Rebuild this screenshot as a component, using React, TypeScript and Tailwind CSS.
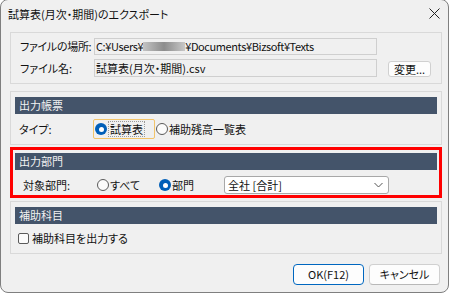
import type { ReactNode } from 'react';

const FONT =
  "font-['Noto_Sans_CJK_JP','Noto_Sans',sans-serif] [font-feature-settings:'palt']";

function Radio({ checked }: { checked?: boolean }) {
  if (checked) {
    return (
      <span className="flex h-[12px] w-[12px] shrink-0 items-center justify-center rounded-full bg-[#005fb8]">
        <span className="h-[5px] w-[5px] rounded-full bg-white" />
      </span>
    );
  }
  return (
    <span className="h-[12px] w-[12px] shrink-0 rounded-full border border-[#5a5a5a] bg-[#fbfbfb]" />
  );
}

function Header({ children }: { children: ReactNode }) {
  return (
    <div className="flex h-[17px] items-center bg-[#44546a] pl-[4px] text-[11px] leading-none text-[#f2f2f2]">
      {children}
    </div>
  );
}

export default function App() {
  return (
    <div className={'h-[294px] w-[450px] overflow-hidden whitespace-nowrap bg-white text-[11px] text-[#111] ' + FONT}>
      <div className="-mt-px flex h-[294px] w-[449px] flex-col rounded-[8px] border border-[#7f7f7f] bg-[#f0f0f0]">
        {/* title bar */}
        <div className="flex h-[32px] items-start justify-between pl-[7px] pr-[6px] pt-[6px]">
          <span className="leading-[16px]">試算表(月次・期間)のエクスポート</span>
          <svg width="11" height="11" viewBox="0 0 11 11" className="mt-[2px] mr-[2px]">
            <path d="M0.5 0.5 L10.5 10.5 M10.5 0.5 L0.5 10.5" stroke="#222" strokeWidth="1" />
          </svg>
        </div>

        <div className="flex flex-col pl-[9px]">
          {/* file location */}
          <div className="flex h-[52px] w-[432px] flex-col gap-[4px] border border-[#d9d9d9] pl-[9px] pt-[5px]">
            <div className="flex h-[17px] items-center">
              <span className="w-[74px] tracking-[-0.3px]">ファイルの場所:</span>
              <div className="flex h-[17px] w-[283px] items-center border border-[#cfcfcf] bg-[#f0f0f0] pl-[1px] text-[11px] tracking-[-0.4px]">
                <span>C:¥Users¥</span>
                <span className="h-[9px] w-[42px] bg-gradient-to-r from-[#c4c4c4] via-[#8c8c8c] to-[#c8c8c8]" />
                <span>¥Documents¥Bizsoft¥Texts</span>
              </div>
            </div>
            <div className="flex h-[18px] items-center">
              <span className="w-[74px]">ファイル名:</span>
              <div className="flex h-[18px] w-[283px] items-center border border-[#cfcfcf] bg-[#f0f0f0] pl-[1px]">
                試算表(月次・期間).csv
              </div>
              <button className="ml-[11px] mt-[2px] flex h-[16px] w-[43px] items-center justify-center rounded-[3px] border border-[#d0d0d0] bg-[#fdfdfd] text-[11px] leading-none">
                変更...
              </button>
            </div>
          </div>

          {/* output report */}
          <div className="mt-[7px] flex h-[54px] w-[432px] flex-col border border-[#d9d9d9] px-[4px] pt-[5px]">
            <Header>出力帳票</Header>
            <div className="mt-[5px] flex h-[20px] items-center">
              <span className="w-[78px] pl-[4px]">タイプ:</span>
              <div className="flex h-[20px] w-[62px] items-center gap-[1px] rounded-[2px] border border-[#f2c46a] pl-[1px]">
                <Radio checked />
                <span className="border border-dotted border-[#9a9a9a] px-[1px] leading-[14px]">試算表</span>
              </div>
              <div className="ml-[1px] flex items-center gap-[1px]">
                <Radio />
                <span>補助残高一覧表</span>
              </div>
            </div>
          </div>

          {/* output department (highlighted) */}
          <div className="mt-[2px] flex h-[51px] w-[432px] flex-col border-[3px] border-[#ff0000] px-[2px] pt-[3px]">
            <Header>出力部門</Header>
            <div className="mt-[6px] flex h-[18px] items-center">
              <span className="w-[82px] pl-[8px]">対象部門:</span>
              <div className="flex w-[62px] items-center gap-[1px]">
                <Radio />
                <span>すべて</span>
              </div>
              <div className="flex w-[65px] items-center gap-[1px]">
                <Radio checked />
                <span>部門</span>
              </div>
              <div className="flex h-[18px] w-[165px] items-center justify-between rounded-[3px] border border-[#a8a8a8] bg-white pl-[3px] pr-[5px]">
                <span>全社 [合計]</span>
                <svg width="9" height="6" viewBox="0 0 9 6">
                  <path d="M0.5 1 L4.5 5 L8.5 1" stroke="#555" strokeWidth="1" fill="none" />
                </svg>
              </div>
            </div>
          </div>

          {/* sub accounts */}
          <div className="mt-[3px] flex h-[53px] w-[432px] flex-col border border-[#d9d9d9] px-[4px] pt-[5px]">
            <Header>補助科目</Header>
            <div className="mt-[6px] flex h-[16px] items-center gap-[3px] pl-[3px]">
              <span className="h-[11px] w-[11px] rounded-[2px] border border-[#5a5a5a] bg-[#fbfbfb]" />
              <span>補助科目を出力する</span>
            </div>
          </div>

          {/* buttons */}
          <div className="mt-[10px] flex w-[430px] justify-end gap-[5px]">
            <button className="flex h-[21px] w-[71px] items-center justify-center rounded-[4px] border border-[#0067c0] bg-[#fdfdfd]">
              OK(F12)
            </button>
            <button className="flex h-[21px] w-[71px] items-center justify-center rounded-[4px] border border-[#d0d0d0] border-b-[#b8b8b8] bg-[#fdfdfd]">
              キャンセル
            </button>
          </div>
        </div>
      </div>
    </div>
  );
}
